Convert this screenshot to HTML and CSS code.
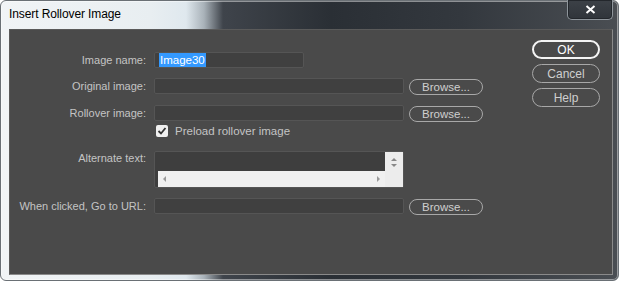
FILE: index.html
```html
<!DOCTYPE html>
<html lang="en">

<head>
    <meta charset="UTF-8">
    <title>Insert Rollover Image</title>
    <link rel="stylesheet" href="styles.css">
</head>

<body>
    <div class="window">
        <div class="titlebar">
            <span class="title">Insert Rollover Image</span>
            <div class="close-btn">
                <svg width="11" height="9" viewBox="0 0 11 9">
                    <path d="M1.5 1 L9.5 8 M9.5 1 L1.5 8" stroke="#fff" stroke-width="2" fill="none" />
                </svg>
            </div>
        </div>

        <div class="client">
            <div class="form">
                <div class="row row-field row-name">
                    <span class="label">Image name:</span>
                    <div class="field field-short"><span class="selected">Image30</span></div>
                </div>
                <div class="row row-field row-original">
                    <span class="label">Original image:</span>
                    <div class="field"></div>
                    <button class="browse-btn">Browse...</button>
                </div>
                <div class="row row-field row-rollover">
                    <span class="label">Rollover image:</span>
                    <div class="field"></div>
                    <button class="browse-btn">Browse...</button>
                </div>
                <div class="row row-check">
                    <span class="checkbox">
                        <svg width="10" height="10" viewBox="0 0 10 10">
                            <path d="M1.5 5 L4 7.5 L8.5 2" stroke="#333" stroke-width="1.8" fill="none" />
                        </svg>
                    </span>
                    <span class="check-text">Preload rollover image</span>
                </div>
                <div class="row row-alt">
                    <span class="label">Alternate text:</span>
                    <div class="textarea">
                        <div class="text-body"></div>
                        <div class="vscroll">
                            <span class="arrow-up"></span>
                            <span class="arrow-down"></span>
                        </div>
                        <div class="hscroll">
                            <span class="arrow-left"></span>
                            <span class="arrow-right"></span>
                        </div>
                    </div>
                </div>
                <div class="row row-field row-url">
                    <span class="label">When clicked, Go to URL:</span>
                    <div class="field"></div>
                    <button class="browse-btn">Browse...</button>
                </div>
            </div>

            <div class="actions">
                <button class="btn btn-primary">OK</button>
                <button class="btn">Cancel</button>
                <button class="btn">Help</button>
            </div>
        </div>
    </div>
</body>

</html>
```

FILE: styles.css
```css
/* Basic reset */
* {
    margin: 0;
    padding: 0;
    box-sizing: border-box;
}

body {
    background: #fff;
    font-family: 'Liberation Sans', Arial, sans-serif;
    font-size: 11px;
    color: #c4c4c4;
}

/* Window frame (glass) */
.window {
    width: 619px;
    height: 281px;
    padding: 0 5px 6px 8px;
    border: 1px solid #6a7075;
    border-radius: 6px;
    background: linear-gradient(90deg, #f1f4f6 0, #e8eef1 150px, #dfe8ee 185px, #a9b2b9 203px, #3f444b 222px, #2a2f35 330px, #33383e 460px, #4a4e53 619px);
    box-shadow: inset 0 0 0 1px rgba(255, 255, 255, 0.45);
}

.titlebar {
    height: 28px;
    display: flex;
    justify-content: space-between;
    align-items: flex-start;
}

.title {
    font-size: 12px;
    color: #000;
    padding-top: 6px;
    letter-spacing: -0.1px;
}

.close-btn {
    width: 46px;
    height: 20px;
    margin-top: -1px;
    display: flex;
    align-items: center;
    justify-content: center;
    background: linear-gradient(180deg, #3c4147, #30353b);
    border: 1px solid #8e959b;
    border-top: none;
    border-radius: 0 0 5px 5px;
    box-shadow: inset 0 0 0 1px #23272c;
}

/* Client area */
.client {
    height: 246px;
    display: flex;
    background: #4a4a4a;
    border: 1px solid #5a5a5a;
    border-right-color: #8a8a8a;
    border-bottom-color: #8a8a8a;
}

.form {
    flex: 1;
    padding-top: 22px;
}

.row {
    display: flex;
    align-items: center;
}

.row-field {
    height: 16px;
}

.label {
    width: 136px;
    margin-right: 8px;
    text-align: right;
    white-space: nowrap;
}

.field {
    width: 250px;
    height: 16px;
    background: #404040;
    border: 1px solid #555;
    border-radius: 2px;
    display: flex;
    align-items: center;
    padding-left: 4px;
}

.field-short {
    width: 150px;
}

.selected {
    background: #3399ff;
    color: #fff;
    font-size: 11.5px;
    line-height: 14px;
    padding: 0 1px;
}

.browse-btn {
    width: 74px;
    height: 16px;
    margin: 2px 0 0 5px;
    background: transparent;
    border: 1px solid #a8a8a8;
    border-radius: 8px;
    color: #cfcfcf;
    font-family: 'Liberation Sans', Arial, sans-serif;
    font-size: 11.5px;
    line-height: 14px;
}

.row-original {
    margin-top: 10px;
}

.row-rollover {
    margin-top: 11px;
}

/* Checkbox */
.row-check {
    margin-top: 4px;
    padding-left: 146px;
}

.checkbox {
    width: 12px;
    height: 12px;
    background: #f0f0f0;
    border-radius: 2px;
    display: flex;
    align-items: center;
    justify-content: center;
}

.check-text {
    margin-left: 7px;
    font-size: 11.5px;
}

/* Alternate text box */
.row-alt {
    margin-top: 14px;
    align-items: flex-start;
}

.row-alt .label {
    padding-top: 1px;
}

.textarea {
    width: 250px;
    height: 37px;
    border: 1px solid #555;
    border-radius: 2px;
    background: #3e3e3e;
    display: grid;
    grid-template-columns: 3px 227px 18px;
    grid-template-rows: 19px 16px;
}

.text-body {
    grid-column: 1 / 3;
}

.vscroll {
    grid-column: 3;
    grid-row: 1 / 3;
    background: #ececec;
    display: flex;
    flex-direction: column;
    align-items: center;
    padding-top: 6px;
    gap: 3px;
}

.hscroll {
    grid-column: 2;
    grid-row: 2;
    background: #f0f0f0;
    display: flex;
    justify-content: space-between;
    align-items: center;
    padding: 0 5px;
}

.arrow-up,
.arrow-down,
.arrow-left,
.arrow-right {
    width: 0;
    height: 0;
    border: 3px solid transparent;
}

.arrow-up {
    border-bottom: 3px solid #888;
    border-top-width: 0;
}

.arrow-down {
    border-top: 3px solid #888;
    border-bottom-width: 0;
}

.arrow-left {
    border-right: 3px solid #999;
    border-left-width: 0;
}

.arrow-right {
    border-left: 3px solid #999;
    border-right-width: 0;
}

.row-url {
    margin-top: 10px;
}

/* Dialog buttons */
.actions {
    width: 68px;
    margin-right: 12px;
    padding-top: 10px;
    display: flex;
    flex-direction: column;
    gap: 5px;
}

.btn {
    height: 19px;
    background: transparent;
    border: 1px solid #a8a8a8;
    border-radius: 10px;
    color: #cfcfcf;
    font-family: 'Liberation Sans', Arial, sans-serif;
    font-size: 12px;
}

.btn-primary {
    border: 2px solid #f4f4f4;
    color: #fff;
}
```
